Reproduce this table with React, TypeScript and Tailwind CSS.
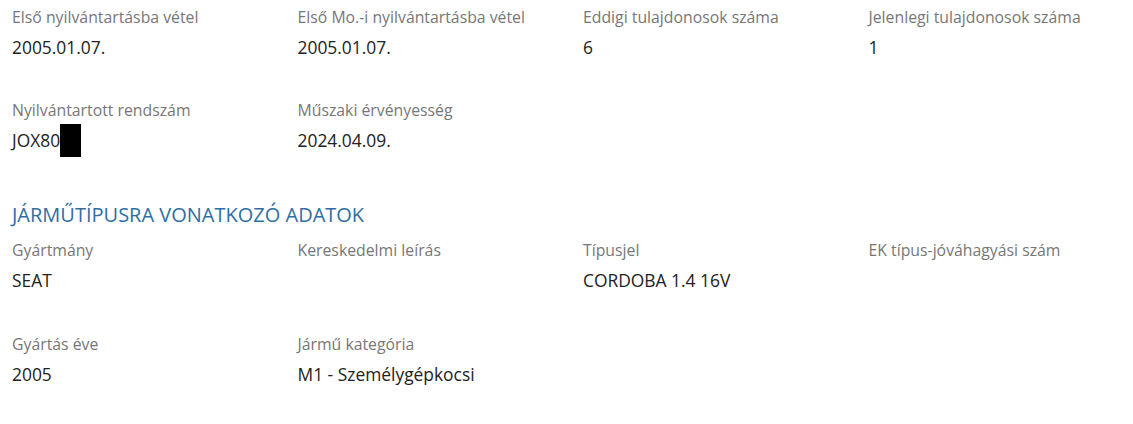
import React from "react";

type Field = { label: string; value?: React.ReactNode };

const Cell = ({ label, value }: Field) => (
  <div className="w-[285.5px] shrink-0">
    <div className="text-[15.8px] leading-[22px] text-[#777777]">{label}</div>
    <div className="mt-[8px] h-[22px] text-[17.4px] leading-[22px] text-[#222222]">{value}</div>
  </div>
);

const Row = ({ items }: { items: Field[] }) => (
  <div className="flex">
    {items.map((f, i) => (
      <Cell key={i} {...f} />
    ))}
  </div>
);

export default function App() {
  return (
    <div
      className="w-[1133px] h-[424px] overflow-hidden bg-white pl-[12px] pt-[6px]"
      style={{ fontFamily: '"Open Sans", sans-serif' }}
    >
      <div className="flex flex-col gap-[41px]">
        <Row
          items={[
            { label: "Első nyilvántartásba vétel", value: "2005.01.07." },
            { label: "Első Mo.-i nyilvántartásba vétel", value: "2005.01.07." },
            { label: "Eddigi tulajdonosok száma", value: "6" },
            { label: "Jelenlegi tulajdonosok száma", value: "1" },
          ]}
        />
        <Row
          items={[
            {
              label: "Nyilvántartott rendszám",
              value: (
                <>
                  JOX80
                  <span className="relative inline-block w-[21px] h-[22px] align-top">
                    <span className="absolute left-0 top-[-5px] w-[21px] h-[33px] bg-black" />
                  </span>
                </>
              ),
            },
            { label: "Műszaki érvényesség", value: "2024.04.09." },
          ]}
        />
      </div>
      <h2 className="mt-[50px] text-[20px] leading-[28px] text-[#2f6ea5] font-normal">
        JÁRMŰTÍPUSRA VONATKOZÓ ADATOK
      </h2>
      <div className="mt-[10px] flex flex-col gap-[42px]">
        <Row
          items={[
            { label: "Gyártmány", value: "SEAT" },
            { label: "Kereskedelmi leírás" },
            { label: "Típusjel", value: "CORDOBA 1.4 16V" },
            { label: "EK típus-jóváhagyási szám" },
          ]}
        />
        <Row
          items={[
            { label: "Gyártás éve", value: "2005" },
            { label: "Jármű kategória", value: "M1 - Személygépkocsi" },
          ]}
        />
      </div>
    </div>
  );
}
